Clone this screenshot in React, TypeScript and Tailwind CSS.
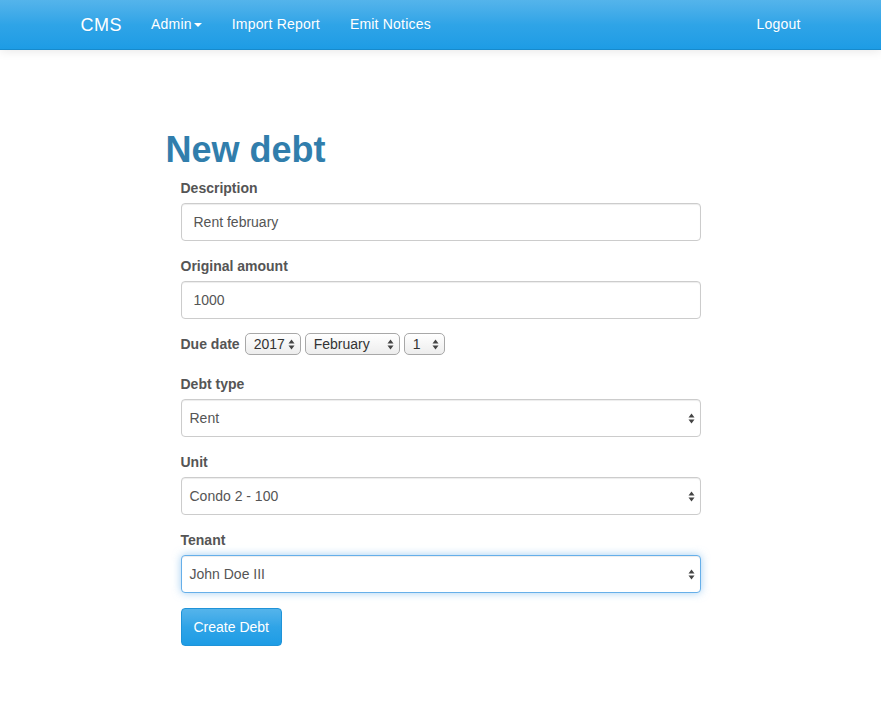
import React from 'react';

const font = { fontFamily: '"Liberation Sans", Arial, sans-serif' };

const Arrows: React.FC<{ className?: string }> = ({ className }) => (
  <svg width="7" height="11" viewBox="0 0 7 11" className={className}>
    <path d="M3.5 0.5 L6.5 4.5 L0.5 4.5 Z" fill="#444" />
    <path d="M3.5 10.5 L6.5 6.5 L0.5 6.5 Z" fill="#444" />
  </svg>
);

const MiniSelect: React.FC<{ value: string; width: string }> = ({ value, width }) => (
  <div
    className={`flex items-center justify-between h-[22px] ${width} pl-[8px] pr-[5px] rounded-[5px] border border-[#a8a8a8] bg-gradient-to-b from-white to-[#ededed] text-[14px] text-[#333] font-normal`}
  >
    <span>{value}</span>
    <Arrows />
  </div>
);

const TextField: React.FC<{ label: string; value: string }> = ({ label, value }) => (
  <div className="mb-[15px]">
    <label className="block text-[14px] leading-[20px] font-bold text-[#555] mb-[5px]">{label}</label>
    <div className="h-[38px] w-full rounded-[4px] border border-[#ccc] bg-white px-[12px] flex items-center text-[14px] text-[#555] shadow-[inset_0_1px_1px_rgba(0,0,0,0.075)]">
      {value}
    </div>
  </div>
);

const SelectField: React.FC<{ label: string; value: string; focused?: boolean }> = ({ label, value, focused }) => (
  <div className="mb-[15px]">
    <label className="block text-[14px] leading-[20px] font-bold text-[#555] mb-[5px]">{label}</label>
    <div
      className={
        focused
          ? 'h-[38px] w-full rounded-[4px] border border-[#66afe9] bg-white pl-[8px] pr-[5px] flex items-center justify-between text-[14px] text-[#555] shadow-[inset_0_1px_1px_rgba(0,0,0,0.075),0_0_8px_rgba(102,175,233,0.6)]'
          : 'h-[38px] w-full rounded-[4px] border border-[#ccc] bg-white pl-[8px] pr-[5px] flex items-center justify-between text-[14px] text-[#555] shadow-[inset_0_1px_1px_rgba(0,0,0,0.075)]'
      }
    >
      <span>{value}</span>
      <Arrows />
    </div>
  </div>
);

const App: React.FC = () => {
  return (
    <div className="min-h-screen bg-white" style={font}>
      <nav className="h-[50px] bg-gradient-to-b from-[#54b4eb] via-[#2fa4e7] to-[#1d9ce5] border-b border-[#178acc] shadow-[0_1px_10px_rgba(0,0,0,0.1)]">
        <div className="w-[750px] mx-auto px-[15px] h-full flex items-center text-white tracking-[0.2px] [text-shadow:0_1px_0_rgba(0,0,0,0.05)]">
          <span className="text-[18px] leading-[20px] tracking-[0.5px] mr-[29px]">CMS</span>
          <span className="text-[14px] flex items-center mr-[30px]">
            Admin
            <span className="ml-[2px] w-0 h-0 border-x-[4px] border-x-transparent border-t-[4px] border-t-white" />
          </span>
          <span className="text-[14px] mr-[30px]">Import Report</span>
          <span className="text-[14px]">Emit Notices</span>
          <span className="text-[14px] ml-auto">Logout</span>
        </div>
      </nav>

      <main className="w-[750px] mx-auto px-[15px] pt-[80px]">
        <div className="ml-[85px] w-[550px]">
          <h1 className="text-[36px] leading-[40px] font-bold text-[#317eac] mb-[8px]">New debt</h1>
          <div className="px-[15px]">
            <TextField label="Description" value="Rent february" />
            <TextField label="Original amount" value="1000" />

            <div className="mb-[15px] flex items-center gap-[4px] h-[25px] pb-[5px]">
              <label className="text-[14px] leading-[20px] font-bold text-[#555] mr-[1px]">Due date</label>
              <MiniSelect value="2017" width="w-[56px]" />
              <MiniSelect value="February" width="w-[95px]" />
              <MiniSelect value="1" width="w-[41px]" />
            </div>

            <SelectField label="Debt type" value="Rent" />
            <SelectField label="Unit" value="Condo 2 - 100" />
            <SelectField label="Tenant" value="John Doe III" focused />

            <button className="h-[38px] px-[12px] rounded-[4px] border border-[#1f93d8] bg-gradient-to-b from-[#54b4eb] via-[#2fa4e7] to-[#1d9ce5] text-white text-[14px]">
              Create Debt
            </button>
          </div>
        </div>
      </main>
    </div>
  );
};

export default App;
